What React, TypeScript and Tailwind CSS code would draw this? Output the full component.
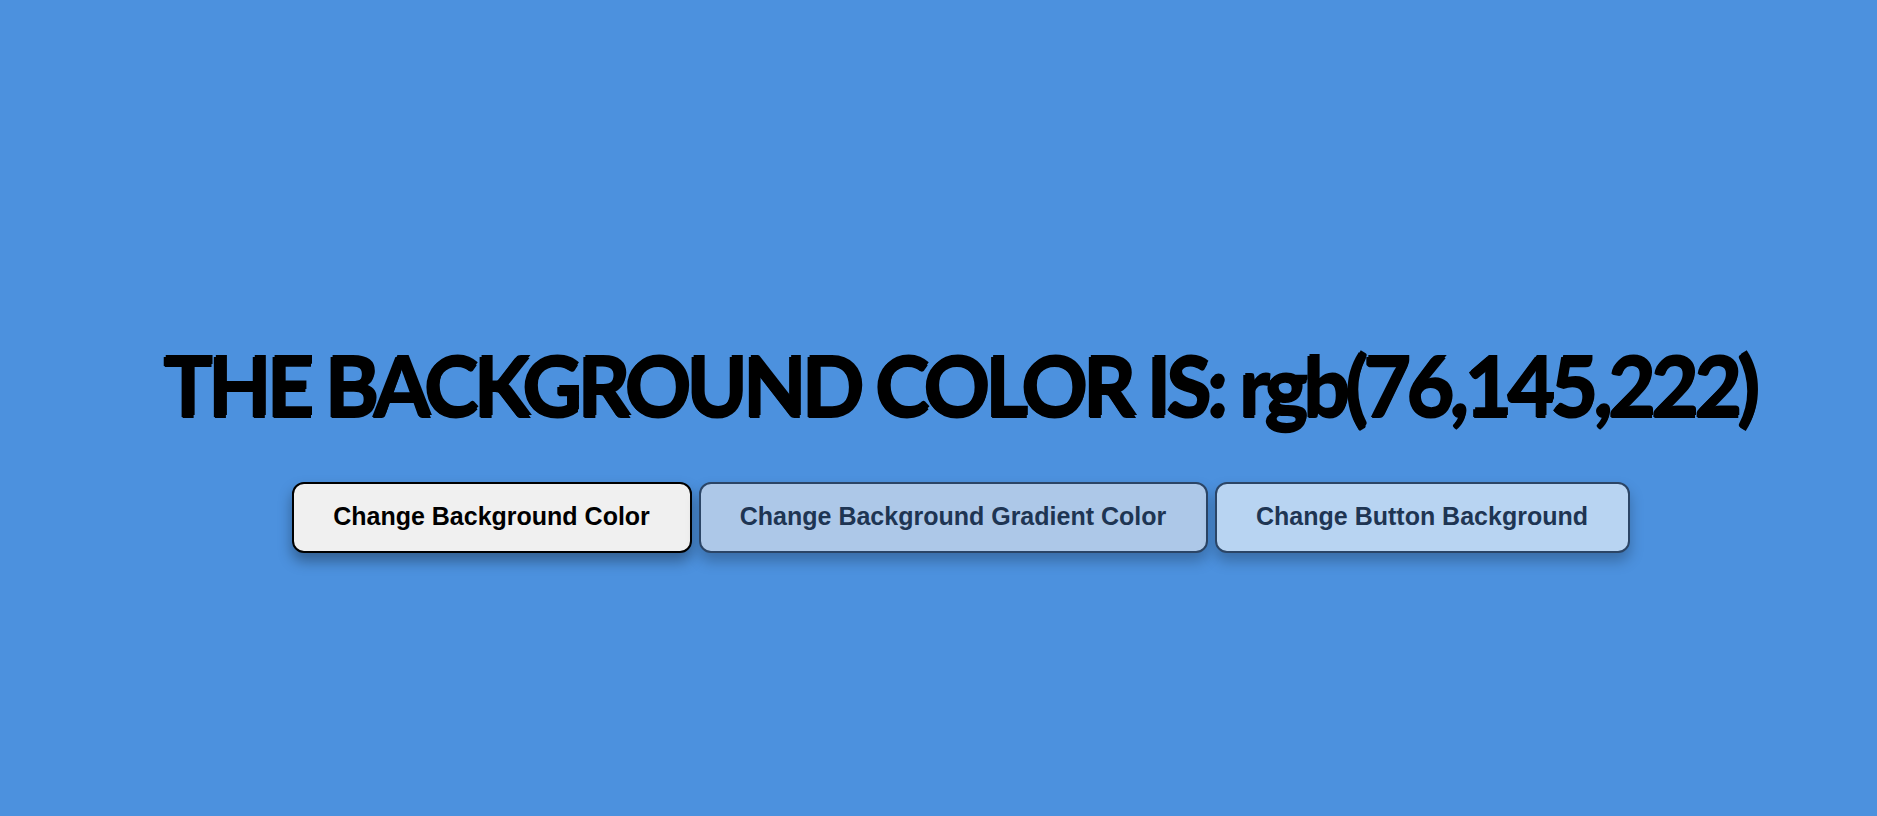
import React from "react";

export default function App() {
  return (
    <div className="min-h-[816px] w-full bg-[#4c91de] flex flex-col items-center justify-center pl-[44px] pt-[86px] pb-[8px]">
      <h1
        className="text-[82px] leading-none font-bold tracking-[-4.5px] text-black whitespace-nowrap font-['Lato',sans-serif] [text-shadow:-2px_2px_0_#000,-1px_3px_0_#000]"
      >
        THE BACKGROUND COLOR IS: rgb(76,145,222)
      </h1>
      <div className="mt-[58px] flex gap-[7px] font-['Liberation_Sans',Arial,sans-serif]">
        <button className="h-[71px] w-[400px] rounded-[12px] border-2 border-black bg-[#f0f0f0] text-[25px] font-bold text-black shadow-[0_8px_14px_rgba(0,0,0,0.35)]">
          Change Background Color
        </button>
        <button className="h-[71px] w-[509px] rounded-[12px] border-2 border-[#2b4566] bg-[#adc8e8] text-[25px] font-bold text-[#1e3553] shadow-[0_8px_14px_rgba(0,0,0,0.25)]">
          Change Background Gradient Color
        </button>
        <button className="h-[71px] w-[415px] rounded-[12px] border-2 border-[#2b4566] bg-[#b8d4f2] text-[25px] font-bold text-[#1e3553] shadow-[0_8px_14px_rgba(0,0,0,0.25)]">
          Change Button Background
        </button>
      </div>
    </div>
  );
}
